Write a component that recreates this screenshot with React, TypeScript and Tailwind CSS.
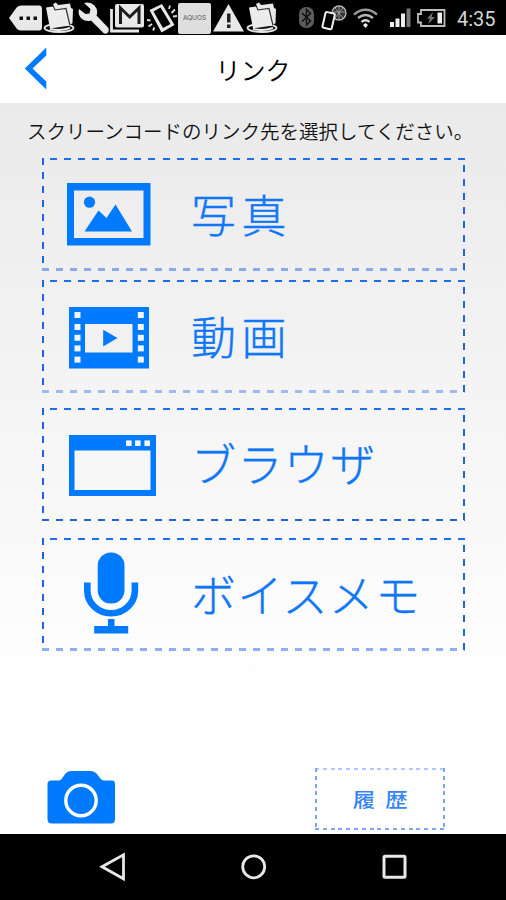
import type { ReactNode } from 'react';
import clsx from 'clsx';

interface LinkOption {
  label: string;
  icon: ReactNode;
  iconClass: string;
  textClass: string;
  bottomClass: string;
}

function FolderIcon() {
  return (
    <svg width="34" height="33" viewBox="0 0 34 33" className="shrink-0">
      <ellipse cx="16" cy="27" rx="14.5" ry="4" fill="#111" stroke="#e4e4e4" strokeWidth="1.8" />
      <path d="M10 3 L13 1.5 L15 4 L27 2.5 L28 7 L30 8 L29.5 22 L26 25 L12 8Z" fill="#e9e9e9" />
      <path d="M3 6.5 L10 5.5 L11.5 9 L23 7.5 L27 24.5 L7 27.5 Z" fill="#ececec" />
      <path d="M11.5 9 L23 7.5 L27 24.5" fill="none" stroke="#333" strokeWidth="1.2" />
      <path d="M7 28 Q17 30.5 27 27" fill="none" stroke="#ececec" strokeWidth="2" />
    </svg>
  );
}

function PhotoIcon() {
  return (
    <svg width="84" height="63" viewBox="0 0 84 63">
      <path d="M0 0H83.5V62.5H0Z M7 7.5V55H76.5V7.5Z" fill="#007aff" fillRule="evenodd" />
      <circle cx="22.5" cy="19.2" r="5.6" fill="#007aff" />
      <path d="M17.5 48.5 L31.5 27.5 L39.5 35 L48.5 21.5 L65 48.5Z" fill="#007aff" />
    </svg>
  );
}

function MovieIcon() {
  const holes = [5, 17, 27.8, 38.4, 49.6];
  return (
    <svg width="80" height="62" viewBox="0 0 80 62">
      <rect width="80" height="61.5" fill="#007aff" />
      {holes.map((y) => (
        <g key={y} fill="#f4f4f4">
          <rect x="5.5" y={y} width="6" height="6" />
          <rect x="68.8" y={y} width="6" height="6" />
        </g>
      ))}
      <rect x="16" y="17" width="47.5" height="28.5" fill="#f1f1f1" />
      <path d="M34.2 22.8 L48.5 31 L34.2 39.5Z" fill="#007aff" />
    </svg>
  );
}

function BrowserIcon() {
  return (
    <svg width="87" height="61" viewBox="0 0 87 61">
      <path d="M0 0H87V61H0Z M5.5 15.5V55H81.5V15.5Z" fill="#007aff" fillRule="evenodd" />
      <g fill="#f6f6f6">
        <rect x="57" y="5.4" width="5.6" height="5.6" />
        <rect x="66" y="5.4" width="5.6" height="5.6" />
        <rect x="75.4" y="5.4" width="5.6" height="5.6" />
      </g>
    </svg>
  );
}

function MicIcon() {
  return (
    <svg width="55" height="82" viewBox="0 0 55 82">
      <rect x="13.7" y="0.5" width="26.8" height="51" rx="13.2" fill="#007aff" />
      <path d="M3.3 30.5V38.5A23.8 22.8 0 0 0 50.9 38.5V30.5" fill="none" stroke="#007aff" strokeWidth="6.6" />
      <path d="M24 67H30.5V74H44.2V81.5H10.2V74H24Z" fill="#007aff" />
    </svg>
  );
}

const options: LinkOption[] = [
  { label: '写真', icon: <PhotoIcon />, iconClass: 'ml-[25px] mt-[25px]', textClass: 'mt-[23px] tracking-[5.5px]', bottomClass: 'opacity-50' },
  { label: '動画', icon: <MovieIcon />, iconClass: 'ml-[27px] mt-[27px]', textClass: 'mt-[23px] tracking-[5.5px]', bottomClass: 'opacity-40' },
  { label: 'ブラウザ', icon: <BrowserIcon />, iconClass: 'ml-[27px] mt-[27px]', textClass: 'mt-[22px] tracking-[1.4px]', bottomClass: '' },
  { label: 'ボイスメモ', icon: <MicIcon />, iconClass: 'ml-[41.5px] mt-[14px]', textClass: 'mt-[23px] tracking-[1.4px]', bottomClass: 'opacity-50' },
];

function DashedFrame({ bottomClass }: { bottomClass: string }) {
  return (
    <>
      <span className="absolute top-0 left-[7.5px] right-0 h-[2px] bg-[repeating-linear-gradient(90deg,#1f6cf0_0_7px,transparent_7px_14.07px)]" />
      <span className="absolute top-0 bottom-0 left-0 w-[2px] bg-[repeating-linear-gradient(180deg,#1f62e4_0_7px,transparent_7px_14px)]" />
      <span className="absolute top-[7px] bottom-0 right-0 w-[2px] bg-[repeating-linear-gradient(180deg,#1f62e4_0_7px,transparent_7px_14px)]" />
      <span className={clsx('absolute left-0 right-0 bg-[repeating-linear-gradient(90deg,#1f62e4_0_7px,transparent_7px_14.07px)]', bottomClass ? '-bottom-px h-[3px]' : '-bottom-px h-[2px]', bottomClass)} />
    </>
  );
}

function OptionButton({ option }: { option: LinkOption }) {
  return (
    <button className="relative flex h-[112px] w-[423px] items-start text-left">
      <DashedFrame bottomClass={option.bottomClass} />
      <span className="w-[149px] shrink-0">
        <span className={clsx('block w-fit', option.iconClass)}>{option.icon}</span>
      </span>
      <span className={clsx('text-[45px] leading-[66px] font-light whitespace-nowrap text-[#0f76f6] [-webkit-text-stroke:0.4px_#0f76f6]', option.textClass)}>
        {option.label}
      </span>
    </button>
  );
}

function StatusBar() {
  return (
    <div className="flex h-[35px] items-start bg-black">
      <svg width="35" height="35" viewBox="0 0 35 35" className="ml-[8px] shrink-0">
        <path d="M1 18 L9 7 Q11 5.5 13 5.5 H31 Q34 5.5 34 9 V27 Q34 30.5 31 30.5 H13 Q11 30.5 9 29Z" fill="#e8e8e8" />
        <g fill="#111">
          <rect x="11.5" y="16.5" width="3.5" height="3.5" />
          <rect x="18.5" y="16.5" width="3.5" height="3.5" />
          <rect x="25.5" y="16.5" width="3.5" height="3.5" />
        </g>
      </svg>
      <div className="w-[35px] pt-[1px]"><FolderIcon /></div>
      <svg width="32" height="35" viewBox="0 0 32 35" className="shrink-0">
        <path d="M6 3 L12.5 9 L11.5 13.5 L7.5 14 L1 9 Q-0.5 15 4 19 Q8 22 13 20.5 L25.5 33 Q28 34.5 30 32.5 Q31.5 30 30 27.5 L18.5 15.5 Q20.5 10 16.5 5.5 Q12 1 6 3Z" fill="#e8e8e8" />
      </svg>
      <svg width="36" height="35" viewBox="0 0 36 35" className="shrink-0">
        <path d="M1.5 9 V31 H29" fill="none" stroke="#e8e8e8" strokeWidth="2.8" />
        <rect x="5" y="4" width="29" height="23.5" rx="2" fill="#e8e8e8" />
        <path d="M10.5 24 V8 L19.7 17 L29 8 V24" fill="none" stroke="#1b1b1b" strokeWidth="3" />
      </svg>
      <svg width="32" height="35" viewBox="0 0 32 35" className="shrink-0">
        <path d="M3.5 10 L16 4 L28.5 25 L15.5 32.5Z M7.5 11.5 L17 28 L24.5 24 L14.5 7.5Z" fill="#e8e8e8" fillRule="evenodd" />
        <path d="M23 9 L24 5.5 M25.5 13 L29 9.5 M27 16.5 L31 16 M1 20 L4.5 20.5 M2.5 26.5 L6 24 M7 30.5 L8.5 27.5" stroke="#dddddd" strokeWidth="1.8" />
      </svg>
      <div className="mt-[3px] flex h-[31px] w-[33px] shrink-0 items-center justify-center rounded-[2px] bg-[#dedede] font-[Inter] text-[6.5px] text-[#555]">
        AQUOS
      </div>
      <svg width="33" height="35" viewBox="0 0 33 35" className="ml-px shrink-0">
        <path d="M16.5 4 L32 31.5 H1Z" fill="#e8e8e8" />
        <path d="M15 13.5 H18.5 V22.5 H15Z M15 24.5 H18.5 V28 H15Z" fill="#222" />
      </svg>
      <div className="ml-px w-[50px] pt-[1px]"><FolderIcon /></div>
      <svg width="20" height="35" viewBox="0 0 20 35" className="mr-[3px] shrink-0">
        <rect x="3" y="7" width="15" height="21" rx="7" fill="#5c5c5c" />
        <path d="M6 13 L14.5 21 L10.5 25 V9.5 L14.5 13.5 L6 21.5" fill="none" stroke="#111" strokeWidth="1.5" />
      </svg>
      <svg width="31" height="35" viewBox="0 0 31 35" className="shrink-0">
        <circle cx="20" cy="13" r="7" fill="#333" stroke="#bbb" strokeWidth="1.3" />
        <path d="M14 12 H26 M20 6 V20 M16 8 L24 18 M24 8 L16 18" stroke="#999" strokeWidth="1" />
        <rect x="5" y="12.5" width="9.5" height="16" rx="1.5" fill="#000" stroke="#eee" strokeWidth="2" transform="rotate(13 9 20)" />
      </svg>
      <svg width="32" height="35" viewBox="0 0 32 35" className="shrink-0" fill="none" strokeWidth="2.3">
        <path d="M4 14.5 Q15.5 5 27 14.5" stroke="#999" />
        <path d="M8 18 Q15.5 12 23 18" stroke="#b5b5b5" />
        <path d="M11.5 21.8 Q15.5 18.8 19.5 21.8" stroke="#ddd" />
        <path d="M13 25 L15.5 28 L18 25 L15.5 23Z" fill="#eee" stroke="none" />
      </svg>
      <svg width="28" height="35" viewBox="0 0 28 35" className="ml-[7px] shrink-0">
        <rect x="1" y="22" width="4" height="5" fill="#eee" />
        <rect x="6.5" y="18.5" width="4" height="8.5" fill="#eee" />
        <rect x="12" y="13.5" width="4" height="13.5" fill="#eee" />
        <rect x="17.5" y="8.5" width="4" height="18.5" fill="#777" />
      </svg>
      <svg width="33" height="35" viewBox="0 0 33 35" className="mr-[3px] shrink-0">
        <path d="M4 10 H27.5 V26 H4 V22.5 H1 V14 H4Z" fill="none" stroke="#bdbdbd" strokeWidth="1.8" />
        <rect x="20.5" y="12.5" width="4.5" height="11" fill="#eee" />
        <path d="M16 12 L10 18.5 H13 L11 24 L18 17 H14.5Z" fill="#777" />
      </svg>
      <span className="ml-[4px] font-[Roboto] text-[20px] leading-[38px] text-[#d4d4d4]">4:35</span>
    </div>
  );
}

export default function App() {
  return (
    <div className="flex h-[900px] w-[506px] flex-col overflow-hidden bg-white font-['Noto_Sans_CJK_JP',sans-serif]">
      <StatusBar />
      <header className="grid h-[68px] grid-cols-[1fr_auto_1fr] items-center bg-white">
        <svg width="24" height="44" viewBox="0 0 24 44" className="ml-[24px]">
          <path d="M22.3 0.5 V8.5 L8.5 21.5 L22.3 34.5 V42.5 L0.8 21.5Z" fill="#007aff" />
        </svg>
        <h1 className="-mt-px text-[25px] leading-[36px] font-[350] text-black">リンク</h1>
      </header>

      <main className="flex h-[731px] flex-col bg-linear-to-b from-[#eaeaea] to-white to-[600px]">
        <p className="mt-[13px] ml-[27px] h-[42px] text-[19.5px] leading-[29px] font-[350] whitespace-nowrap text-[#111]">
          スクリーンコードのリンク先を選択してください。
        </p>
        <div className="ml-[42px] flex flex-col">
          <OptionButton option={options[0]} />
          <div className="mt-[10px]"><OptionButton option={options[1]} /></div>
          <div className="mt-[16px]"><OptionButton option={options[2]} /></div>
          <div className="mt-[18px]"><OptionButton option={options[3]} /></div>
        </div>

        <div className="mt-auto flex items-end justify-between pb-[4px] pl-[45.5px] pr-[61px]">
          <svg width="70" height="55" viewBox="0 0 70 55" className="mb-[5px]">
            <path d="M5 10.5 H13 Q15 10.5 17 7 L19.5 3.5 Q21.5 1 25 1 H45 Q48 1 50.5 3.5 L54 8 Q56 10.5 58 10.5 H66 Q69 10.5 69 14 V49 Q69 53.5 65 53.5 H6 Q1.5 53.5 1.5 49 V14 Q1.5 10.5 5 10.5Z" fill="#007aff" />
            <circle cx="35" cy="30.5" r="15.2" fill="none" stroke="#fff" strokeWidth="3.4" />
          </svg>
          <button className="relative flex h-[62px] w-[130px] items-center justify-center pt-px text-[19px] font-medium text-[#3484f2]">
            <span className="absolute top-0 left-0 right-0 h-[2px] bg-[repeating-linear-gradient(90deg,#b3c8fa_0_4px,transparent_4px_7.8px)]" />
            <span className="absolute top-0 bottom-0 left-0 w-[2px] bg-[repeating-linear-gradient(180deg,#78a7f5_0_4px,transparent_4px_7.8px)]" />
            <span className="absolute top-0 bottom-0 right-0 w-[2px] bg-[repeating-linear-gradient(180deg,#78a7f5_0_4px,transparent_4px_7.8px)]" />
            <span className="absolute bottom-0 left-0 right-0 h-[2px] bg-[repeating-linear-gradient(90deg,#78a7f5_0_4px,transparent_4px_7.8px)]" />
            <span className="scale-x-[1.18]">履&nbsp; 歴</span>
          </button>
        </div>
      </main>

      <nav className="flex h-[66px] items-start bg-black pl-[99px]">
        <svg width="30" height="66" viewBox="0 0 30 66">
          <path d="M3 32.8 L24.5 20.8 V44.8Z" fill="none" stroke="#e8e8e8" strokeWidth="2.8" />
        </svg>
        <svg width="30" height="66" viewBox="0 0 30 66" className="ml-[110px]">
          <circle cx="14.7" cy="32.8" r="11" fill="none" stroke="#e8e8e8" strokeWidth="2.8" />
        </svg>
        <svg width="30" height="66" viewBox="0 0 30 66" className="ml-[111px]">
          <rect x="4" y="22.3" width="21" height="21" rx="1" fill="none" stroke="#e8e8e8" strokeWidth="3" />
        </svg>
      </nav>
    </div>
  );
}
